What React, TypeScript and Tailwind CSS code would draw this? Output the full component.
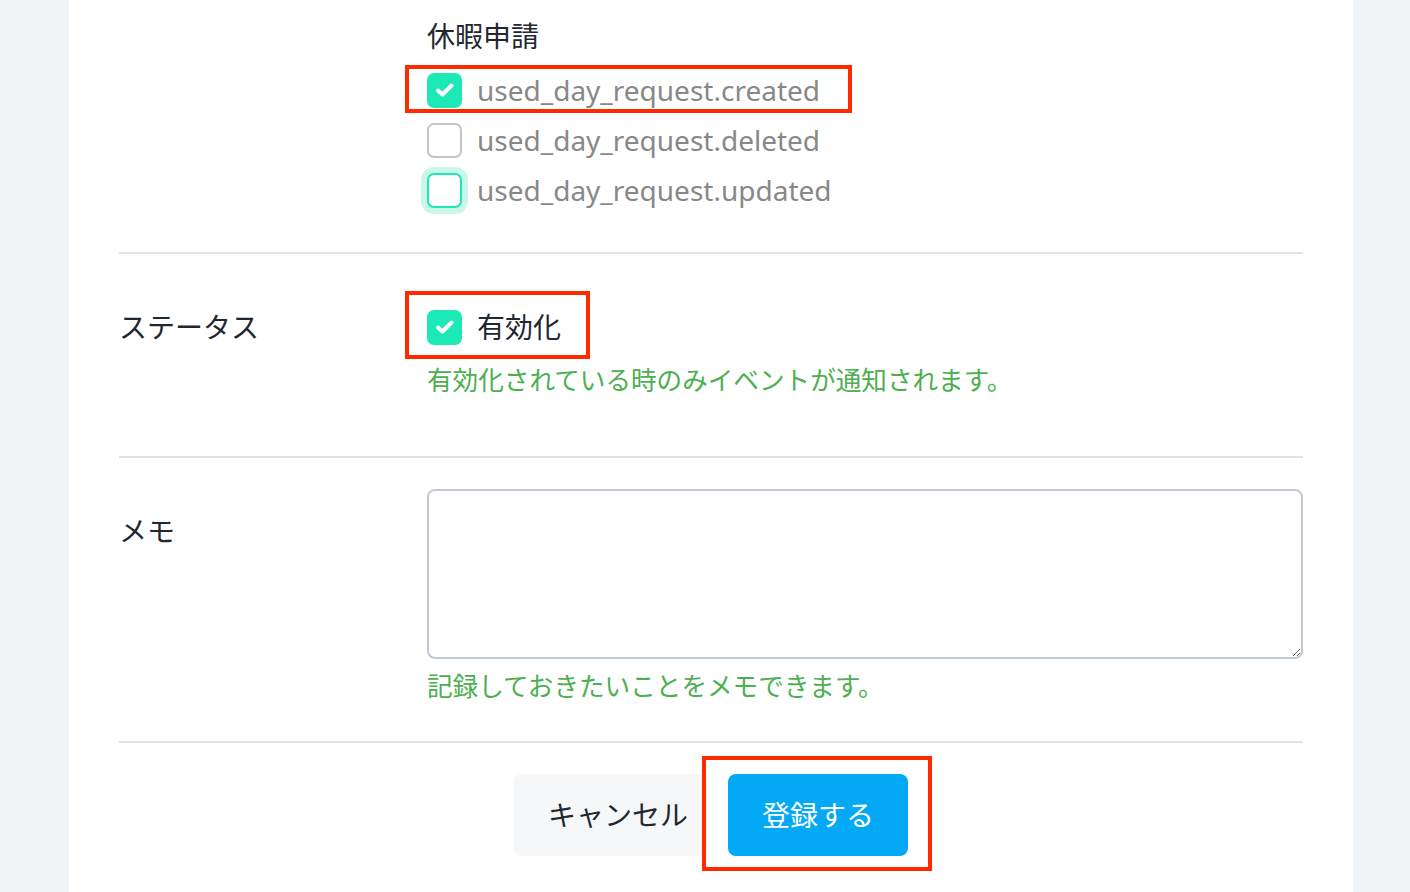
import type React from 'react';

const font = {
  fontFamily: '"Noto Sans", "Noto Sans CJK JP", sans-serif',
};

interface CheckProps {
  checked?: boolean;
  focused?: boolean;
}

const CheckBox: React.FC<CheckProps> = ({ checked, focused }) => {
  if (checked) {
    return (
      <span className="flex h-[35px] w-[35px] shrink-0 items-center justify-center rounded-[7px] bg-[#1de9b6]">
        <svg className="h-[24px] w-[24px]" viewBox="0 0 24 24" fill="none" stroke="white" strokeWidth="4" strokeLinecap="round" strokeLinejoin="round">
          <polyline points="5 12.5 9.5 16.5 18.5 7.5" />
        </svg>
      </span>
    );
  }
  return (
    <span
      className={`block h-[35px] w-[35px] shrink-0 rounded-[7px] border-2 bg-white ${
        focused ? 'border-[#1de9b6] ring-[6px] ring-[#c9f8eb]' : 'border-[#c4c4c4]'
      }`}
    />
  );
};

const events = [
  { name: 'used_day_request.created', checked: true, focused: false },
  { name: 'used_day_request.deleted', checked: false, focused: false },
  { name: 'used_day_request.updated', checked: false, focused: true },
];

export default function App() {
  return (
    <div className="min-h-screen bg-[#f0f4f7] text-[#222831]" style={font}>
      <div className="ml-[69px] w-[1284px] bg-white px-[50px] pb-[36px]">
        {/* 通知イベント */}
        <div className="grid grid-cols-[308px_1fr] pt-[16px] pb-[37px]">
          <div />
          <div>
            <div className="text-[28px] leading-[40px]">休暇申請</div>
            <div className="mt-[9px] flex flex-col">
              {events.map((ev, i) => (
                <label key={ev.name} className="relative flex h-[50px] items-center gap-[15px]">
                  <CheckBox checked={ev.checked} focused={ev.focused} />
                  <span className="text-[28px] leading-[40px] text-[#888888]">{ev.name}</span>
                  {i === 0 && (
                    <span className="pointer-events-none absolute -left-[22px] top-0 h-[48px] w-[447px] border-4 border-[#ff2a00]" />
                  )}
                </label>
              ))}
            </div>
          </div>
        </div>

        {/* ステータス */}
        <div className="grid grid-cols-[308px_1fr] border-t-2 border-[#e2e2e2] pt-[48px] pb-[57px]">
          <div className="text-[28px] leading-[50px]">ステータス</div>
          <div>
            <label className="relative flex h-[50px] items-center gap-[15px]">
              <CheckBox checked />
              <span className="text-[28px] leading-[40px]">有効化</span>
              <span className="pointer-events-none absolute -left-[22px] -top-[11px] h-[68px] w-[185px] border-4 border-[#ff2a00]" />
            </label>
            <p className="mt-[11px] text-[25.6px] leading-[36px] text-[#4caf50]">
              有効化されている時のみイベントが通知されます。
            </p>
          </div>
        </div>

        {/* メモ */}
        <div className="grid grid-cols-[308px_1fr] border-t-2 border-[#e2e2e2] pt-[31px] pb-[36px]">
          <div className="pt-[22px] text-[28px] leading-[40px]">メモ</div>
          <div>
            <textarea className="block h-[170px] w-full rounded-[8px] border-2 border-[#c2cbd4] bg-white px-3 py-2 text-[28px] outline-none" />
            <p className="mt-[10px] text-[25.6px] leading-[36px] text-[#4caf50]">
              記録しておきたいことをメモできます。
            </p>
          </div>
        </div>

        {/* 操作ボタン */}
        <div className="flex justify-center gap-[21px] border-t-2 border-[#e2e2e2] pt-[31px]">
          <button className="h-[82px] w-[193px] rounded-[8px] bg-[#f6f7f9] pl-[15px] text-[28px] text-[#222831]">
            キャンセル
          </button>
          <div className="relative">
            <button className="h-[82px] w-[180px] rounded-[8px] bg-[#03a9f4] text-[28px] text-white">
              登録する
            </button>
            <span className="pointer-events-none absolute -left-[26px] -top-[18px] h-[115px] w-[230px] border-4 border-[#ff2a00]" />
          </div>
        </div>
      </div>
    </div>
  );
}
